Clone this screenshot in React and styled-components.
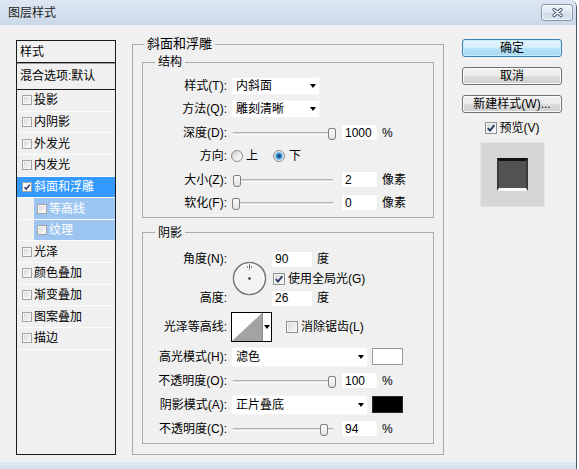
import React from 'react';
import styled, { createGlobalStyle } from 'styled-components';

const Global = createGlobalStyle`
  * { box-sizing: border-box; }
  html, body { margin: 0; padding: 0; background: #ffffff; }
  body {
    font-family: "Liberation Sans", "Noto Sans CJK SC", sans-serif;
    font-size: 12px;
    line-height: 14px;
    color: #000;
  }
`;

const Window = styled.div`
  width: 577px;
  height: 469px;
  display: flex;
  flex-direction: column;
  background: #f0f0f0;
  border-right: 1px solid #4d5561;
  border-top-right-radius: 7px;
  overflow: hidden;
`;

const TitleBar = styled.div`
  height: 25px;
  flex: none;
  display: flex;
  align-items: center;
  justify-content: space-between;
  padding: 0 3px 0 8px;
  background: linear-gradient(#dde7f3, #cbd8e8);
  color: #1e1e1e;
`;

const Title = styled.span`
  font-size: 12px;
`;

const CloseBtn = styled.div`
  width: 32px;
  height: 17px;
  border: 1px solid #8797ab;
  border-radius: 3px;
  background: linear-gradient(#f1f5fa, #dde6f0 50%, #d0dbe8 51%, #dce5f0);
  box-shadow: inset 0 0 0 1px rgba(255, 255, 255, 0.6);
  display: flex;
  align-items: center;
  justify-content: center;
`;

const Body = styled.div`
  flex: 1;
  display: flex;
  align-items: flex-start;
  padding-left: 16px;
`;

const BottomFrame = styled.div`
  height: 7px;
  flex: none;
  background: linear-gradient(#e2eaf4, #d5e0ee);
`;

/* ---------- left style list ---------- */
const StyleList = styled.div`
  width: 100px;
  height: 415px;
  margin-top: 15px;
  flex: none;
  border: 1px solid #1a1a1a;
  background: #f0f0f0;
  display: flex;
  flex-direction: column;
`;

const ListHeader = styled.div`
  height: 22px;
  flex: none;
  padding-left: 3px;
  display: flex;
  align-items: center;
  border-bottom: 1px solid #1a1a1a;
  box-shadow: 0 1px 0 #9c9c9c;
`;

const BlendRow = styled.div`
  height: 27px;
  flex: none;
  padding-left: 3px;
  display: flex;
  align-items: center;
  border-bottom: 1px solid #1a1a1a;
`;

const Item = styled.div`
  height: 21.65px;
  flex: none;
  display: flex;
  align-items: center;
  gap: 2px;
  padding-left: ${(p) => (p.$sub ? 0 : 5)}px;
  border-bottom: 1px solid #fbfbfb;
  background: ${(p) => (p.$selected ? '#3399ff' : 'transparent')};
  color: ${(p) => (p.$selected ? '#ffffff' : '#000000')};
`;

const SubIndent = styled.div`
  width: 15px;
  flex: none;
  align-self: stretch;
`;

const SubFill = styled.div`
  flex: 1;
  align-self: stretch;
  display: flex;
  align-items: center;
  gap: 2px;
  padding-left: 3px;
  background: #9cc6f1;
  color: #ffffff;
`;

/* ---------- group boxes ---------- */
const Group = styled.fieldset`
  flex: none;
  min-width: 0;
  width: ${(p) => (p.$w ? `${p.$w}px` : 'auto')};
  margin: ${(p) => p.$mt || 0}px 0 0 ${(p) => p.$ml || 0}px;
  padding: ${(p) => p.$pad};
  border: 1px solid #a9a9a9;
`;

const Legend = styled.legend`
  padding: 0 3px;
  margin-left: ${(p) => p.$ml}px;
  font-size: ${(p) => p.$fs || 12}px;
  line-height: 14px;
`;

const Stack = styled.div`
  display: flex;
  flex-direction: column;
  gap: ${(p) => p.$gap}px;
`;

const Row = styled.div`
  display: flex;
  align-items: center;
  height: ${(p) => p.$h || 18}px;
`;

const Label = styled.div`
  width: 84px;
  flex: none;
  margin-right: 4px;
  text-align: right;
  white-space: nowrap;
`;

const Text = styled.span`
  margin-left: ${(p) => p.$ml || 0}px;
  white-space: nowrap;
`;

const FakeSelect = styled.div`
  width: ${(p) => p.$w}px;
  height: ${(p) => p.$h || 18}px;
  flex: none;
  display: flex;
  align-items: center;
  justify-content: space-between;
  padding: 0 3px 0 4px;
  background: #ffffff;
  border: 1px solid #f3f3f3;
`;

const Caret = styled.span`
  width: 0;
  height: 0;
  border-left: 3.5px solid transparent;
  border-right: 3.5px solid transparent;
  border-top: 4px solid #000;
`;

const Field = styled.input`
  width: ${(p) => p.$w || 37}px;
  height: 17px;
  flex: none;
  margin: 0 0 0 ${(p) => p.$ml || 0}px;
  padding: 0 3px;
  border: 1px solid #ececec;
  background: #ffffff;
  font: 12px "Liberation Sans", sans-serif;
  color: #000;
  outline: none;
`;

const Swatch = styled.div`
  width: 31px;
  height: 17px;
  flex: none;
  margin-left: 4px;
  background: ${(p) => p.$color};
  border: 1px solid ${(p) => (p.$color === '#000000' ? '#2a2a2a' : '#9a9a9a')};
`;

/* ---------- slider ---------- */
const SliderWrap = styled.div`
  position: relative;
  flex: none;
  width: 107px;
  height: 18px;
  display: flex;
  align-items: center;
`;

const SliderTrack = styled.div`
  flex: 1;
  height: 3px;
  margin: 2px 5px 0 2px;
  background: #dcdcdc;
  border-top: 1px solid #b5b5b5;
  border-bottom: 1px solid #ffffff;
`;

const SliderThumb = styled.div`
  position: absolute;
  top: 4px;
  width: 8px;
  height: 12px;
  border: 1px solid #7e7e7e;
  border-radius: 2px 2px 3px 3px;
  background: linear-gradient(#fbfbfb, #e2e2e2);
`;

function Slider({ value }) {
  return (
    <SliderWrap>
      <SliderTrack />
      <SliderThumb style={{ left: `${1 + value * 96}px` }} />
    </SliderWrap>
  );
}

/* ---------- checkbox / radio ---------- */
const CheckBoxBox = styled.span`
  flex: none;
  display: inline-flex;
  align-items: center;
  justify-content: center;
  width: ${(p) => p.$size}px;
  height: ${(p) => p.$size}px;
  margin-left: ${(p) => p.$ml || 0}px;
  border: 1px solid ${(p) => (p.$size < 12 ? '#a3a3a3' : '#8e8f8f')};
  background: ${(p) =>
    p.$white ? '#ffffff' : 'linear-gradient(135deg, #d4d4d4 0%, #ebebeb 55%, #fbfbfb 100%)'};
  box-shadow: inset 0 0 0 1px #f6f6f6;
`;

function CheckBox({ checked, size = 12, ml, white }) {
  return (
    <CheckBoxBox $size={size} $ml={ml} $white={white}>
      {checked && (
        <svg width={size - 2} height={size - 2} viewBox="0 0 10 10">
          <path d="M1.8 5.2 L4 7.6 L8.4 2.2" fill="none" stroke="#2b3a66" strokeWidth="1.9" />
        </svg>
      )}
    </CheckBoxBox>
  );
}

const Radio = styled.span`
  flex: none;
  width: 12px;
  height: 12px;
  margin-left: ${(p) => p.$ml || 0}px;
  border-radius: 50%;
  border: 1px solid #8e8f8f;
  background: ${(p) =>
    p.$checked
      ? 'radial-gradient(circle, #10406e 0, #1b63a0 1.5px, #4fa3dc 3px, #bfe0f5 4px, #e6e6e6 4.6px, #f8f8f8 100%)'
      : 'linear-gradient(135deg, #d0d0d0, #efefef 60%, #fdfdfd)'};
`;

/* ---------- angle / contour ---------- */
const AngleGrid = styled.div`
  display: grid;
  grid-template-columns: 84px 44px auto;
  grid-template-rows: 17px 17px 17px;
  row-gap: 2.5px;
  align-items: center;
  height: 56px;
`;

const GridLabel = styled.div`
  grid-column: 1;
  grid-row: ${(p) => p.$row};
  text-align: right;
  white-space: nowrap;
`;

const Dial = styled.div`
  grid-column: 2;
  grid-row: 1 / 4;
  justify-self: center;
  display: flex;
`;

const GridCell = styled.div`
  grid-column: 3;
  grid-row: ${(p) => p.$row};
  display: flex;
  align-items: center;
`;

const ContourBox = styled.div`
  width: 41px;
  height: 30px;
  flex: none;
  display: flex;
  border: 1px solid #000;
  background: #fff;
`;

const ContourArrow = styled.div`
  flex: 1;
  display: flex;
  align-items: center;
  justify-content: center;
  border-left: 1px solid #8a8a8a;
`;

/* ---------- side column ---------- */
const Side = styled.div`
  width: 100px;
  flex: none;
  margin: 14px 0 0 18px;
  display: flex;
  flex-direction: column;
`;

const Btn = styled.button`
  width: 100px;
  height: 18px;
  margin-top: ${(p) => p.$mt || 0}px;
  padding: 0;
  font: 12px "Liberation Sans", "Noto Sans CJK SC", sans-serif;
  line-height: 14px;
  color: #000;
  border: 1px solid ${(p) => (p.$primary ? '#3c7fb1' : '#707070')};
  border-radius: 3px;
  background: ${(p) =>
    p.$primary
      ? 'linear-gradient(#e6f5fd 0%, #d3eefb 50%, #b8e3f8 51%, #a3d8f3 100%)'
      : 'linear-gradient(#f2f2f2 0%, #ebebeb 50%, #dddddd 51%, #cfcfcf 100%)'};
  box-shadow: inset 0 0 0 1px ${(p) => (p.$primary ? '#c5ebfc' : '#fbfbfb')};
`;

const PreviewRow = styled.div`
  height: 16px;
  margin-top: 7px;
  display: flex;
  align-items: center;
  justify-content: center;
  gap: 3px;
`;

const PreviewBox = styled.div`
  width: 65px;
  height: 65px;
  margin-top: 6px;
  align-self: center;
  display: flex;
  align-items: center;
  justify-content: center;
  background: #d6d6d6;
  border: 1px solid #e4e4e4;
`;

const PreviewSquare = styled.div`
  width: 31px;
  height: 33px;
  background: #525252;
  border-top: 3px solid #111111;
  border-bottom: 3px solid #f7f7f7;
  border-left: 2px solid #393939;
  border-right: 2px solid #393939;
`;

const items = [
  { label: '投影' },
  { label: '内阴影' },
  { label: '外发光' },
  { label: '内发光' },
  { label: '斜面和浮雕', selected: true, checked: true },
  { label: '等高线', sub: true },
  { label: '纹理', sub: true },
  { label: '光泽' },
  { label: '颜色叠加' },
  { label: '渐变叠加' },
  { label: '图案叠加' },
  { label: '描边' },
];

function SliderRow({ label, value, field, unit }) {
  return (
    <Row>
      <Label>{label}</Label>
      <Slider value={value} />
      <Field $ml={3} readOnly defaultValue={field} />
      <Text $ml={4}>{unit}</Text>
    </Row>
  );
}

export default function App() {
  return (
    <>
      <Global />
      <Window>
        <TitleBar>
          <Title>图层样式</Title>
          <CloseBtn>
            <svg width="13" height="11" viewBox="0 0 13 11">
              <path d="M3 2.5 L10 8.5 M10 2.5 L3 8.5" stroke="#46566a" strokeWidth="3.4" strokeLinecap="round" />
              <path d="M3 2.5 L10 8.5 M10 2.5 L3 8.5" stroke="#ffffff" strokeWidth="1.6" strokeLinecap="round" />
            </svg>
          </CloseBtn>
        </TitleBar>

        <Body>
          <StyleList>
            <ListHeader>样式</ListHeader>
            <BlendRow>混合选项:默认</BlendRow>
            {items.map((it) =>
              it.sub ? (
                <Item key={it.label} $sub>
                  <SubIndent />
                  <SubFill>
                    <CheckBox size={10} />
                    <span>{it.label}</span>
                  </SubFill>
                </Item>
              ) : (
                <Item key={it.label} $selected={it.selected}>
                  <CheckBox size={10} checked={it.checked} white={it.selected} />
                  <span>{it.label}</span>
                </Item>
              )
            )}
          </StyleList>

          <Group $w={312} $mt={12} $ml={16} $pad="4px 9px 10px 9px">
            <Legend $ml={2} $fs={13}>斜面和浮雕</Legend>

            <Group $mt={0} $pad="8px 0 5px 0">
              <Legend $ml={12}>结构</Legend>
              <Stack $gap={5.4}>
                <Row>
                  <Label>样式(T):</Label>
                  <FakeSelect $w={89}>
                    <span>内斜面</span>
                    <Caret />
                  </FakeSelect>
                </Row>
                <Row>
                  <Label>方法(Q):</Label>
                  <FakeSelect $w={89}>
                    <span>雕刻清晰</span>
                    <Caret />
                  </FakeSelect>
                </Row>
                <SliderRow label="深度(D):" value={1} field="1000" unit="%" />
                <Row>
                  <Label>方向:</Label>
                  <Radio />
                  <Text $ml={3}>上</Text>
                  <Radio $ml={15} $checked />
                  <Text $ml={4}>下</Text>
                </Row>
                <SliderRow label="大小(Z):" value={0.008} field="2" unit="像素" />
                <SliderRow label="软化(F):" value={0} field="0" unit="像素" />
              </Stack>
            </Group>

            <Group $mt={8} $pad="11px 0 5px 0">
              <Legend $ml={12}>阴影</Legend>
              <Stack $gap={5}>
                <AngleGrid>
                  <GridLabel $row={1}>角度(N):</GridLabel>
                  <GridLabel $row={3}>高度:</GridLabel>
                  <Dial>
                    <svg width="35" height="35" viewBox="0 0 35 35">
                      <circle cx="17.5" cy="17.5" r="16" fill="#f3f3f3" stroke="#7b7b7b" strokeWidth="1.6" />
                      <circle cx="17.5" cy="17.5" r="14.6" fill="none" stroke="#ffffff" strokeWidth="0.8" />
                      <path d="M17.5 3.5 V8.5 M15 6 H20" stroke="#222" strokeWidth="1" strokeDasharray="1 1" />
                      <rect x="16.5" y="16.5" width="2" height="2" fill="#000" />
                    </svg>
                  </Dial>
                  <GridCell $row={1}>
                    <Field $w={42} readOnly defaultValue="90" />
                    <Text $ml={4}>度</Text>
                  </GridCell>
                  <GridCell $row={2}>
                    <CheckBox ml={2} checked />
                    <Text $ml={3}>使用全局光(G)</Text>
                  </GridCell>
                  <GridCell $row={3}>
                    <Field $w={42} readOnly defaultValue="26" />
                    <Text $ml={4}>度</Text>
                  </GridCell>
                </AngleGrid>

                <Row $h={30}>
                  <Label>光泽等高线:</Label>
                  <ContourBox>
                    <svg width="30" height="28" viewBox="0 0 30 28">
                      <polygon points="0,28 30,0 30,28" fill="#a3a3a3" />
                    </svg>
                    <ContourArrow>
                      <Caret />
                    </ContourArrow>
                  </ContourBox>
                  <CheckBox ml={14} />
                  <Text $ml={3}>消除锯齿(L)</Text>
                </Row>

                <Row $h={20}>
                  <Label>高光模式(H):</Label>
                  <FakeSelect $w={137} $h={20}>
                    <span>滤色</span>
                    <Caret />
                  </FakeSelect>
                  <Swatch $color="#ffffff" />
                </Row>
                <SliderRow label="不透明度(O):" value={1} field="100" unit="%" />
                <Row $h={20}>
                  <Label>阴影模式(A):</Label>
                  <FakeSelect $w={137} $h={20}>
                    <span>正片叠底</span>
                    <Caret />
                  </FakeSelect>
                  <Swatch $color="#000000" />
                </Row>
                <SliderRow label="不透明度(C):" value={0.92} field="94" unit="%" />
              </Stack>
            </Group>
          </Group>

          <Side>
            <Btn $primary>确定</Btn>
            <Btn $mt={10}>取消</Btn>
            <Btn $mt={10}>新建样式(W)...</Btn>
            <PreviewRow>
              <CheckBox size={12} checked />
              <span>预览(V)</span>
            </PreviewRow>
            <PreviewBox>
              <PreviewSquare />
            </PreviewBox>
          </Side>
        </Body>
        <BottomFrame />
      </Window>
    </>
  );
}
